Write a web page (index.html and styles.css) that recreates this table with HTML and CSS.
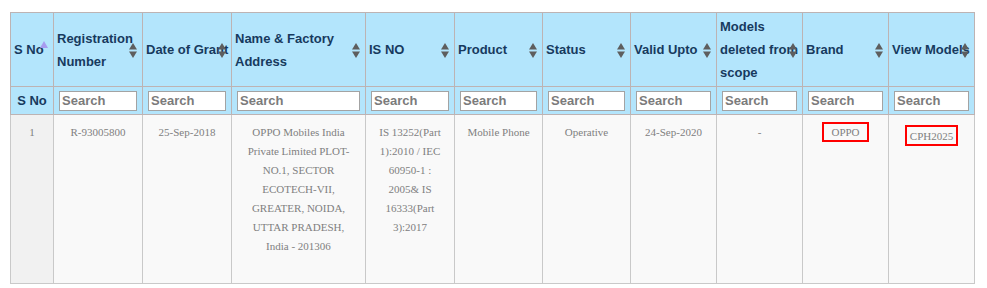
FILE: index.html
```html
<!DOCTYPE html>
<html>
<head>
<meta charset="utf-8">
<link rel="stylesheet" href="styles.css">
</head>
<body>
<div class="page">
<table class="grid">
  <colgroup>
    <col style="width:43px"><col style="width:89px"><col style="width:89px"><col style="width:134px"><col style="width:89px"><col style="width:88px"><col style="width:88px"><col style="width:86px"><col style="width:86px"><col style="width:86px"><col style="width:86px">
  </colgroup>
  <thead>
    <tr class="head">
      <th>S No<svg class="sort asc" width="8" height="15" viewBox="0 0 8 15"><polygon points="4,0 8,7 0,7"/></svg></th>
      <th>Registration Number<svg class="sort" width="8" height="15" viewBox="0 0 8 15"><polygon points="4,0 8,6.5 0,6.5"/><polygon points="0,8.5 8,8.5 4,15"/></svg></th>
      <th>Date of Grant<svg class="sort" width="8" height="15" viewBox="0 0 8 15"><polygon points="4,0 8,6.5 0,6.5"/><polygon points="0,8.5 8,8.5 4,15"/></svg></th>
      <th>Name &amp; Factory Address<svg class="sort" width="8" height="15" viewBox="0 0 8 15"><polygon points="4,0 8,6.5 0,6.5"/><polygon points="0,8.5 8,8.5 4,15"/></svg></th>
      <th>IS NO<svg class="sort" width="8" height="15" viewBox="0 0 8 15"><polygon points="4,0 8,6.5 0,6.5"/><polygon points="0,8.5 8,8.5 4,15"/></svg></th>
      <th>Product<svg class="sort" width="8" height="15" viewBox="0 0 8 15"><polygon points="4,0 8,6.5 0,6.5"/><polygon points="0,8.5 8,8.5 4,15"/></svg></th>
      <th>Status<svg class="sort" width="8" height="15" viewBox="0 0 8 15"><polygon points="4,0 8,6.5 0,6.5"/><polygon points="0,8.5 8,8.5 4,15"/></svg></th>
      <th>Valid Upto<svg class="sort" width="8" height="15" viewBox="0 0 8 15"><polygon points="4,0 8,6.5 0,6.5"/><polygon points="0,8.5 8,8.5 4,15"/></svg></th>
      <th>Models deleted from scope<svg class="sort" width="8" height="15" viewBox="0 0 8 15"><polygon points="4,0 8,6.5 0,6.5"/><polygon points="0,8.5 8,8.5 4,15"/></svg></th>
      <th>Brand<svg class="sort" width="8" height="15" viewBox="0 0 8 15"><polygon points="4,0 8,6.5 0,6.5"/><polygon points="0,8.5 8,8.5 4,15"/></svg></th>
      <th>View Models<svg class="sort" width="8" height="15" viewBox="0 0 8 15"><polygon points="4,0 8,6.5 0,6.5"/><polygon points="0,8.5 8,8.5 4,15"/></svg></th>
    </tr>
    <tr class="filters">
      <th class="label">S No</th>
      <td><input type="text" placeholder="Search"></td>
      <td><input type="text" placeholder="Search"></td>
      <td><input type="text" placeholder="Search"></td>
      <td><input type="text" placeholder="Search"></td>
      <td><input type="text" placeholder="Search"></td>
      <td><input type="text" placeholder="Search"></td>
      <td><input type="text" placeholder="Search"></td>
      <td><input type="text" placeholder="Search"></td>
      <td><input type="text" placeholder="Search"></td>
      <td><input type="text" placeholder="Search"></td>
    </tr>
  </thead>
  <tbody>
    <tr class="row">
      <td class="sorted">1</td>
      <td>R-93005800</td>
      <td>25-Sep-2018</td>
      <td>OPPO Mobiles India Private Limited PLOT-NO.1, SECTOR ECOTECH-VII, GREATER, NOIDA, UTTAR PRADESH, India - 201306</td>
      <td>IS 13252(Part 1):2010 / IEC 60950-1 : 2005&amp; IS 16333(Part 3):2017</td>
      <td>Mobile Phone</td>
      <td>Operative</td>
      <td>24-Sep-2020</td>
      <td>-</td>
      <td><span class="mark brand">OPPO</span></td>
      <td><span class="mark model">CPH2025</span></td>
    </tr>
  </tbody>
</table>
</div>
</body>
</html>
```

FILE: styles.css
```css
html, body {
  margin: 0;
  padding: 0;
  background: #ffffff;
}

.page {
  padding: 12px 0 0 10px;
}

.grid {
  width: 965px;
  table-layout: fixed;
  border-collapse: collapse;
  font-family: "Liberation Sans", Arial, sans-serif;
}

.grid th,
.grid td {
  border: 1px solid #bdb3b3;
}

.head th {
  position: relative;
  background: #b3e5fc;
  color: #173a5e;
  font-size: 13px;
  font-weight: bold;
  line-height: 23px;
  text-align: left;
  vertical-align: middle;
  padding: 2px 2px 2px 3px;
  height: 69px;
}

.sort {
  position: absolute;
  right: 5px;
  top: 50%;
  margin-top: -7px;
  fill: #5e5e5e;
}

.sort.asc {
  margin-top: -9px;
  fill: #a79cef;
}

.filters th,
.filters td {
  background: #b3e5fc;
  padding: 3px 5px 3px 5px;
  height: 21px;
  vertical-align: middle;
}

.filters .label {
  color: #173a5e;
  font-size: 13px;
  font-weight: bold;
  text-align: center;
  padding: 0;
}

.filters input {
  display: block;
  box-sizing: border-box;
  width: 100%;
  height: 20px;
  margin: 0;
  padding: 0 2px;
  border: 1px solid #a3a3a3;
  background: #ffffff;
  font-family: "Liberation Sans", Arial, sans-serif;
  font-size: 13px;
  font-weight: bold;
  color: #555;
}

.filters input::placeholder {
  color: #7b7b7b;
  opacity: 1;
}

.row td {
  background: #f9f9f9;
  border-color: #c9c9c9;
  color: #808080;
  font-family: "Liberation Serif", "Times New Roman", serif;
  font-size: 11px;
  line-height: 19px;
  text-align: center;
  vertical-align: top;
  padding: 8px 10px 27px;
  height: 133px;
}

.row td.sorted {
  background: #f1f1f1;
}

.mark {
  display: inline-block;
  border: 2px solid #ff0000;
  line-height: 16px;
}

.mark.brand {
  padding: 0 7px;
  margin-top: -1px;
}

.mark.model {
  padding: 1px 3px 0;
  margin-top: 2px;
}
```
